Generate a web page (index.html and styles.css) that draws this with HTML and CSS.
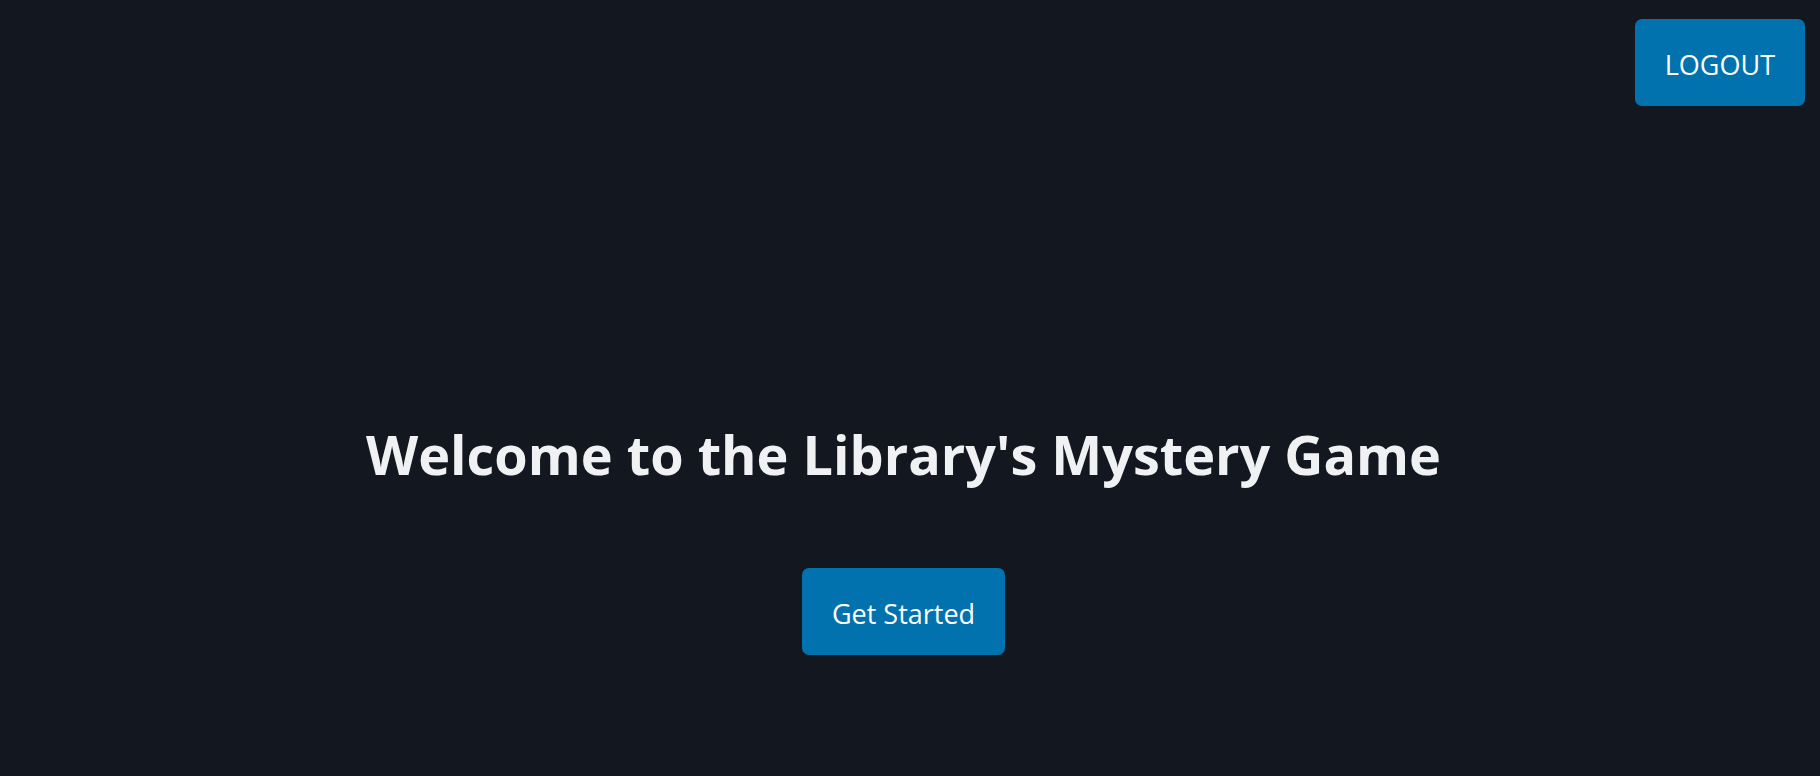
FILE: index.html
```html
<!DOCTYPE html>
<html lang="en">
<head>
<meta charset="utf-8">
<title>Library's Mystery Game</title>
<link rel="stylesheet" href="styles.css">
</head>
<body class="page">
<header class="topbar"><button class="button" type="button">LOGOUT</button></header>
<main class="welcome">
<h1 class="title">Welcome to the Library's Mystery Game</h1>
<button class="button" type="button">Get Started</button>
</main>
</body>
</html>
```
FILE: styles.css
```css
* { box-sizing: border-box; }
.page {
  margin: 0;
  min-height: 100vh;
  background: #13171f;
  font-family: "Segoe UI", "Open Sans", "Noto Sans", sans-serif;
  display: flex;
  flex-direction: column;
}
.topbar {
  display: flex;
  justify-content: flex-end;
  padding: 19px 15px 0 0;
}
.welcome {
  flex: 1;
  display: flex;
  flex-direction: column;
  align-items: center;
  justify-content: flex-end;
  gap: 72px;
  padding: 0 28px 121px 15px;
}
.title {
  margin: 0;
  color: #f0f1f3;
  font-size: 54px;
  line-height: 84px;
  font-weight: 700;
  text-align: center;
}
.button {
  border: 0;
  border-radius: 7px;
  padding: 23px 30px 19px;
  background: #0172ad;
  color: #fff;
  font-family: inherit;
  font-size: 27px;
  line-height: 45px;
  cursor: pointer;
}
```
